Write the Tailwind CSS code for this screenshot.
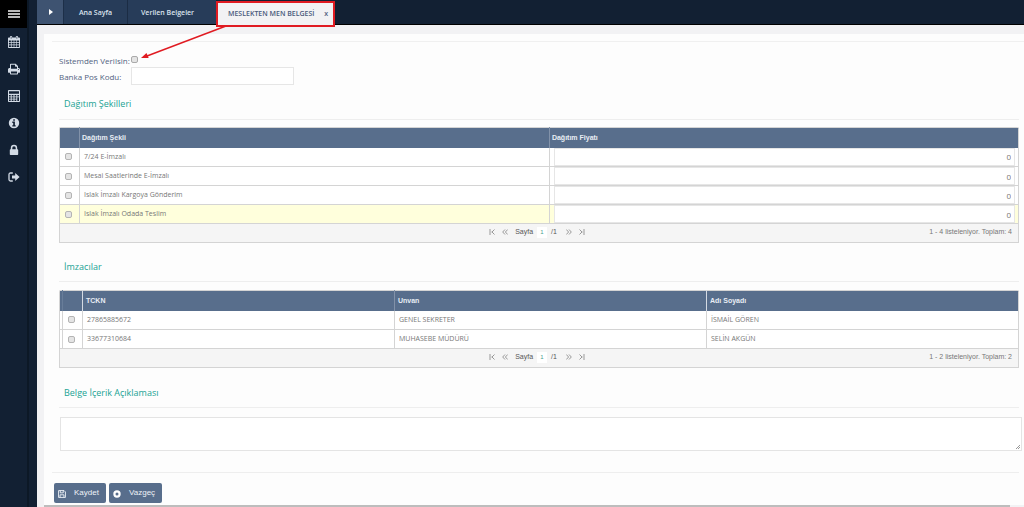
<!DOCTYPE html>
<html lang="tr">
<head>
<meta charset="utf-8">
<title>Meslekten Men Belgesi</title>
<script src="https://cdn.jsdelivr.net/npm/@tailwindcss/browser@4"></script>
</head>
<body class="relative flex min-h-screen bg-[#122033] font-['Open_Sans','Noto_Sans',sans-serif] text-[7px] leading-[10px] text-[#777]">

<aside class="w-[29px] shrink-0 border-r-2 border-[#0c1826]">
  <nav class="flex flex-col text-[#d3dbe6]">
    <button aria-label="Menü" class="flex h-7 items-center justify-center bg-black text-[#b9b9b9]">
      <svg class="h-3 w-3" viewBox="0 0 12 12" fill="currentColor"><path d="M0 2h12v2H0zM0 5h12v2H0zM0 8h12v2H0z"/></svg>
    </button>
    <a href="#" aria-label="Takvim" class="flex h-[27px] items-center justify-center"><svg class="h-3 w-3" viewBox="0 0 12 12"><path fill="currentColor" fill-rule="evenodd" d="M2 1.500V.8C2 .3 2.300 0 2.800 0h.6c.5 0 .8.300.8.800v.7h3.600V.8c0-.5.300-.8.800-.8h.6c.5 0 .8.300.8.800v.7h.9c.6 0 1.100.4 1.100 1V11c0 .6-.4 1-1 1H1c-.6 0-1-.4-1-1V2.500c0-.6.4-1 1-1zM.9 4.600v1.600h2V4.600zm2.700 0v1.600h2.100V4.600zm2.700 0v1.600h2.100V4.600zm2.700 0v1.600h2.100V4.600zM.9 6.900v1.600h2V6.900zm2.700 0v1.600h2.100V6.900zm2.700 0v1.600h2.100V6.900zm2.700 0v1.600h2.100V6.900zM.9 9.200v1.900h2V9.200zm2.700 0v1.900h2.100V9.200zm2.700 0v1.900h2.100V9.200zm2.700 0v1.900h2.100V9.200zM2.800.8v2h.6v-2zm5.800 0v2h.6v-2z"/></svg></a>
    <a href="#" aria-label="Yazdır" class="flex h-[27px] items-center justify-center"><svg class="h-3 w-3" viewBox="0 0 12 12"><path fill="currentColor" fill-rule="evenodd" d="M2 5V1.500C2 1.100 2.300.8 2.700.8h5L10 3v2h.4C11.300 5 12 5.700 12 6.500v2.800c0 .3-.2.500-.5.500H10v.9c0 .4-.3.700-.7.700H2.700c-.4 0-.7-.3-.7-.7v-.9H.5c-.3 0-.5-.2-.5-.5V6.500C0 5.700.7 5 1.600 5zM3 1.800v4h6V3.700H7.700c-.4 0-.7-.3-.7-.7V1.800zM3 8.400v2h6v-2zM10.400 6a.5.500 0 1 0 0 1 .5.500 0 0 0 0-1z"/></svg></a>
    <a href="#" aria-label="Hesap makinesi" class="flex h-[27px] items-center justify-center"><svg class="h-3 w-3" viewBox="0 0 12 12"><path fill="currentColor" fill-rule="evenodd" d="M1 0h10c.6 0 1 .4 1 1v10c0 .6-.4 1-1 1H1c-.6 0-1-.4-1-1V1c0-.6.4-1 1-1zm0 1.200v2.600h10V1.200zM1 5v1.500h1.700V5zm2.700 0v1.500h1.800V5zm2.800 0v1.500h1.800V5zm2.800 0v1.500H11V5zM1 7.300v1.500h1.700V7.300zm2.700 0v1.500h1.800V7.300zm2.800 0v1.500h1.800V7.300zM1 9.600v1.500h1.700V9.600zm2.700 0v1.500h1.800V9.600zm2.800 0v1.500h1.800V9.600zm2.800-2.300v3.800H11V7.300z"/></svg></a>
    <a href="#" aria-label="Bilgi" class="flex h-[27px] items-center justify-center"><svg class="h-3 w-3" viewBox="0 0 12 12"><path fill="currentColor" fill-rule="evenodd" d="M6 .8a5.200 5.200 0 1 0 0 10.400A5.200 5.200 0 0 0 6 .8zM5.200 2.200h1.700v1.500H5.200zM4.300 4.600h2.600v3.700h.8v1.300H4.300V8.300h.9V5.900h-.9z"/></svg></a>
    <a href="#" aria-label="Kilit" class="flex h-[27px] items-center justify-center"><svg class="h-3 w-3" viewBox="0 0 12 12"><path fill="currentColor" fill-rule="evenodd" d="M2.800 5.300V4a3.200 3.200 0 0 1 6.400 0v1.300h.3c.4 0 .7.300.7.700v4.300c0 .4-.3.700-.7.700h-7c-.4 0-.7-.3-.7-.7V6c0-.4.300-.7.700-.7zm1.500 0h3.400V4a1.700 1.700 0 0 0-3.400 0z"/></svg></a>
    <a href="#" aria-label="Çıkış" class="flex h-[27px] items-center justify-center"><svg class="h-3 w-3" viewBox="0 0 12 12"><path fill="none" stroke="currentColor" stroke-width="1.300" d="M4.800 2H2.500C1.600 2 1 2.600 1 3.500v5c0 .9.600 1.500 1.500 1.500h2.300"/><path fill="currentColor" d="M4 4.500h3.200V2L11.600 6 7.200 10V7.500H4z"/></svg></a>
  </nav>
</aside>

<div class="flex min-w-0 grow flex-col pl-2">
  <header class="flex h-[25px] border-b border-black font-semibold text-[#dbe3ee]">
    <button aria-label="Genişlet" class="flex w-[27px] items-center justify-center border-r border-[#1d2f48] bg-[#3e5371]">
      <svg class="h-[6px] w-[5px]" viewBox="0 0 5 6" fill="#fff"><path d="M1 0l4 3-4 3z"/></svg>
    </button>
    <a href="#" class="flex w-16 items-center justify-center border-r border-[#1b2c44] bg-[#273c59] pt-[2px]">Ana Sayfa</a>
    <a href="#" class="flex w-[88px] items-center bg-[#273c59] pl-[13px] pt-[2px]">Verilen Belgeler</a>
    <a href="#" class="z-10 mt-px flex h-[26px] w-[119px] items-center justify-between border-2 border-[#e01b22] bg-[#f2f2f4] pl-[10px] pr-[5px] text-[#4a5a7c]"><span>MESLEKTEN MEN BELGESİ</span><span>x</span></a>
  </header>

  <main class="flex grow flex-col bg-[#f2f2f4] pl-[7px] pt-[9px]">
    <form class="flex grow flex-col bg-[#fdfdfd] pl-2 pt-[7px]">
      <hr class="border-[#f0f0f0]">
      <div class="flex flex-col pl-[7px]">
        <div class="mt-[11px] flex h-[13px] items-center text-[8px] text-[#52637f]">
          <label for="sys" class="w-[72px] pt-[2px]">Sistemden Verilsin:</label>
          <input id="sys" type="checkbox" class="h-[7px] w-[7px] appearance-none rounded-[2px] border border-[#aaa] bg-[#e4e4e4]">
        </div>
        <div class="flex h-[19px] items-center text-[8px] text-[#52637f]">
          <label for="pos" class="w-[72px] pt-[2px]">Banka Pos Kodu:</label>
          <input id="pos" type="text" class="h-[18px] w-[163px] border border-[#e6e6e6] bg-white px-1">
        </div>

        <h2 class="mt-[12px] pl-[5px] text-[9px] leading-[14px] text-[#1aa394]">Dağıtım Şekilleri</h2>
        <hr class="mr-[5px] mt-2 border-[#eee]">
        <div class="mr-[5px] mt-[7px] overflow-hidden rounded-t-[2px]">
          <table class="w-full table-fixed border-collapse border border-[#d4d4d4] text-left">
            <colgroup><col class="w-5"><col class="w-[49%]"><col></colgroup>
            <thead class="font-['Liberation_Sans',Arial,sans-serif]">
              <tr class="h-5 bg-[#586e8c] text-[#e8edf4]">
                <th class="border-r border-[#8292a9]"></th>
                <th class="border-r border-[#8292a9] pl-[2px]">Dağıtım Şekli</th>
                <th class="pl-[2px]">Dağıtım Fiyatı</th>
              </tr>
            </thead>
            <tbody>
              <tr class="h-[19px] border-b border-[#d4d4d4] bg-white">
                <td class="border-r border-[#d4d4d4]"><input type="checkbox" aria-label="7/24 E-İmzalı" class="ml-[5px] block h-[7px] w-[7px] appearance-none rounded-[2px] border border-[#b4b4b4] bg-[#e4e4e4]"></td>
                <td class="border-r border-[#d4d4d4] pl-1">7/24 E-İmzalı</td>
                <td class="py-0 pl-1 pr-[3px]"><input type="text" value="0" aria-label="Fiyat" class="block h-[18px] w-full border border-[#e6e6e6] bg-white px-[3px] text-right text-[8px]"></td>
              </tr>
              <tr class="h-[19px] border-b border-[#d4d4d4] bg-white">
                <td class="border-r border-[#d4d4d4]"><input type="checkbox" aria-label="Mesai Saatlerinde E-İmzalı" class="ml-[5px] block h-[7px] w-[7px] appearance-none rounded-[2px] border border-[#b4b4b4] bg-[#e4e4e4]"></td>
                <td class="border-r border-[#d4d4d4] pl-1">Mesai Saatlerinde E-İmzalı</td>
                <td class="py-0 pl-1 pr-[3px]"><input type="text" value="0" aria-label="Fiyat" class="block h-[18px] w-full border border-[#e6e6e6] bg-white px-[3px] text-right text-[8px]"></td>
              </tr>
              <tr class="h-[19px] border-b border-[#d4d4d4] bg-white">
                <td class="border-r border-[#d4d4d4]"><input type="checkbox" aria-label="Islak İmzalı Kargoya Gönderim" class="ml-[5px] block h-[7px] w-[7px] appearance-none rounded-[2px] border border-[#b4b4b4] bg-[#e4e4e4]"></td>
                <td class="border-r border-[#d4d4d4] pl-1">Islak İmzalı Kargoya Gönderim</td>
                <td class="py-0 pl-1 pr-[3px]"><input type="text" value="0" aria-label="Fiyat" class="block h-[18px] w-full border border-[#e6e6e6] bg-white px-[3px] text-right text-[8px]"></td>
              </tr>
              <tr class="h-[19px] border-b border-[#d4d4d4] bg-[#ffffdc]">
                <td class="border-r border-[#d4d4d4]"><input type="checkbox" aria-label="Islak İmzalı Odada Teslim" class="ml-[5px] block h-[7px] w-[7px] appearance-none rounded-[2px] border border-[#b4b4b4] bg-[#e4e4e4]"></td>
                <td class="border-r border-[#d4d4d4] pl-1">Islak İmzalı Odada Teslim</td>
                <td class="py-0 pl-1 pr-[3px]"><input type="text" value="0" aria-label="Fiyat" class="block h-[18px] w-full border border-[#e6e6e6] bg-white px-[3px] text-right text-[8px]"></td>
              </tr>
            </tbody>
          </table>
          <div class="grid h-[19px] grid-cols-[1fr_auto_1fr] items-center border border-t-0 border-[#d4d4d4] bg-[#f5f5f5] pb-[2px] font-['Liberation_Sans',Arial,sans-serif]">
            <span></span>
            <div class="flex items-center text-[#555]">
              <button type="button" aria-label="İlk sayfa" class="mr-[7px]"><svg class="h-[6px] w-[6px]" viewBox="0 0 6 6" fill="none" stroke="#999"><path d="M1 0v6M5.500.500L3 3l2.500 2.500M2.500 3h1"/></svg></button>
              <button type="button" aria-label="Önceki sayfa" class="mr-[7px]"><svg class="h-[6px] w-[6px]" viewBox="0 0 6 6" fill="none" stroke="#999"><path d="M3 .500L.700 3 3 5.500M5.700.500L3.400 3l2.300 2.500"/></svg></button>
              <span>Sayfa</span>
              <input type="text" value="1" aria-label="Sayfa" class="ml-1 mr-1 h-[11px] w-[10px] bg-white text-center text-[6px] text-[#4a9e90]">
              <span>/1</span>
              <button type="button" aria-label="Sonraki sayfa" class="ml-[9px] mr-[7px]"><svg class="h-[6px] w-[6px]" viewBox="0 0 6 6" fill="none" stroke="#999"><path d="M.300.500L2.600 3 .300 5.500M3 .500L5.300 3 3 5.500"/></svg></button>
              <button type="button" aria-label="Son sayfa" class="mr-1"><svg class="h-[6px] w-[6px]" viewBox="0 0 6 6" fill="none" stroke="#999"><path d="M5 0v6M.500.500L3 3 .500 5.500M2.500 3h1"/></svg></button>
            </div>
            <span class="pr-[6px] text-right">1 - 4 listeleniyor. Toplam: 4</span>
          </div>
        </div>

        <h2 class="mt-[17px] pl-[5px] text-[9px] leading-[14px] text-[#1aa394]">İmzacılar</h2>
        <hr class="mr-[5px] mt-[7px] border-[#eee]">
        <div class="mr-[5px] mt-2 overflow-hidden rounded-t-[2px]">
          <table class="w-full table-fixed border-collapse border border-[#d4d4d4] text-left">
            <colgroup><col class="w-[3px]"><col class="w-5"><col><col><col></colgroup>
            <thead class="font-['Liberation_Sans',Arial,sans-serif]">
              <tr class="h-5 bg-[#586e8c] text-[#e8edf4]">
                <th class="border-r border-[#687d99] p-0"></th>
                <th class="border-r border-[#d4dae3]"></th>
                <th class="border-r border-[#8292a9] pl-[3px]">TCKN</th>
                <th class="border-r border-[#d4dae3] pl-[3px]">Unvan</th>
                <th class="pl-[3px]">Adı Soyadı</th>
              </tr>
            </thead>
            <tbody>
              <tr class="h-[19px] border-b border-[#d4d4d4] bg-white">
                <td class="border-r border-[#d4d4d4] p-0"></td>
                <td class="border-r border-[#d4d4d4]"><input type="checkbox" aria-label="İSMAİL GÖREN" class="ml-[5px] block h-[7px] w-[7px] appearance-none rounded-[2px] border border-[#b4b4b4] bg-[#e4e4e4]"></td>
                <td class="border-r border-[#d4d4d4] pl-1">27865885672</td>
                <td class="border-r border-[#d4d4d4] pl-1">GENEL SEKRETER</td>
                <td class="pl-1">İSMAİL GÖREN</td>
              </tr>
              <tr class="h-[19px] border-b border-[#d4d4d4] bg-white">
                <td class="border-r border-[#d4d4d4] p-0"></td>
                <td class="border-r border-[#d4d4d4]"><input type="checkbox" aria-label="SELİN AKGÜN" class="ml-[5px] block h-[7px] w-[7px] appearance-none rounded-[2px] border border-[#b4b4b4] bg-[#e4e4e4]"></td>
                <td class="border-r border-[#d4d4d4] pl-1">33677310684</td>
                <td class="border-r border-[#d4d4d4] pl-1">MUHASEBE MÜDÜRÜ</td>
                <td class="pl-1">SELİN AKGÜN</td>
              </tr>
            </tbody>
          </table>
          <div class="grid h-[19px] grid-cols-[1fr_auto_1fr] items-center border border-t-0 border-[#d4d4d4] bg-[#f5f5f5] pb-[2px] font-['Liberation_Sans',Arial,sans-serif]">
            <span></span>
            <div class="flex items-center text-[#555]">
              <button type="button" aria-label="İlk sayfa" class="mr-[7px]"><svg class="h-[6px] w-[6px]" viewBox="0 0 6 6" fill="none" stroke="#999"><path d="M1 0v6M5.500.500L3 3l2.500 2.500M2.500 3h1"/></svg></button>
              <button type="button" aria-label="Önceki sayfa" class="mr-[7px]"><svg class="h-[6px] w-[6px]" viewBox="0 0 6 6" fill="none" stroke="#999"><path d="M3 .500L.700 3 3 5.500M5.700.500L3.400 3l2.300 2.500"/></svg></button>
              <span>Sayfa</span>
              <input type="text" value="1" aria-label="Sayfa" class="ml-1 mr-1 h-[11px] w-[10px] bg-white text-center text-[6px] text-[#4a9e90]">
              <span>/1</span>
              <button type="button" aria-label="Sonraki sayfa" class="ml-[9px] mr-[7px]"><svg class="h-[6px] w-[6px]" viewBox="0 0 6 6" fill="none" stroke="#999"><path d="M.300.500L2.600 3 .300 5.500M3 .500L5.300 3 3 5.500"/></svg></button>
              <button type="button" aria-label="Son sayfa" class="mr-1"><svg class="h-[6px] w-[6px]" viewBox="0 0 6 6" fill="none" stroke="#999"><path d="M5 0v6M.500.500L3 3 .500 5.500M2.500 3h1"/></svg></button>
            </div>
            <span class="pr-[6px] text-right">1 - 2 listeleniyor. Toplam: 2</span>
          </div>
        </div>

        <h2 class="mt-[18px] pl-[5px] text-[9px] leading-[14px] text-[#1aa394]"><label for="desc">Belge İçerik Açıklaması</label></h2>
        <hr class="mr-[5px] mt-[7px] border-[#eee]">
        <div class="relative ml-px mr-[2px] mt-[9px]">
          <textarea id="desc" class="block h-[34px] w-full resize-none border border-[#e4e4e4] bg-white p-1"></textarea>
          <svg class="pointer-events-none absolute bottom-[2px] right-[2px] h-1 w-1" viewBox="0 0 4 4" stroke="#999" fill="none"><path d="M0 4l4-4M2 4l2-2"/></svg>
        </div>
      </div>
      <hr class="mr-[5px] mt-[21px] border-[#eee]">
      <div class="ml-[2px] mt-[10px] flex gap-[3px] font-['Liberation_Sans',Arial,sans-serif] text-[8px] text-[#eef2f7]">
        <button type="submit" class="flex h-[20px] w-[52px] items-center gap-2 rounded-[2px] bg-[#586e8c] pl-1">
          <svg class="mt-[2px] h-2 w-2" viewBox="0 0 7 7" fill="none" stroke="currentColor" stroke-width=".8"><path d="M.500.500h4.800l1.200 1.200v4.800h-6zM2 .500v2h2.600v-2M1.800 6.500v-2.300h3.400v2.300"/></svg>
          <span>Kaydet</span>
        </button>
        <button type="button" class="flex h-[20px] w-[53px] items-center gap-2 rounded-[2px] bg-[#586e8c] pl-1">
          <svg class="mt-[2px] h-2 w-2" viewBox="0 0 8 8" fill="none" stroke="#fff" stroke-width="2.200"><circle cx="4" cy="4" r="2.600"/></svg>
          <span>Vazgeç</span>
        </button>
      </div>
    </form>
    <div class="mr-[14px] h-[2px] bg-[#bdbdbd]"></div>
  </main>
</div>

<!-- Arrow from the active tab to the checkbox -->
<svg class="pointer-events-none absolute left-[138px] top-[24px] z-20 h-[38px] w-[92px]" viewBox="0 0 92 38"><path d="M88 2L9 32" stroke="#e01b22" stroke-width="1.400" fill="none"/><path d="M3 34l5.500-5 2.200 5z" fill="#e01b22"/></svg>
</body>
</html>
